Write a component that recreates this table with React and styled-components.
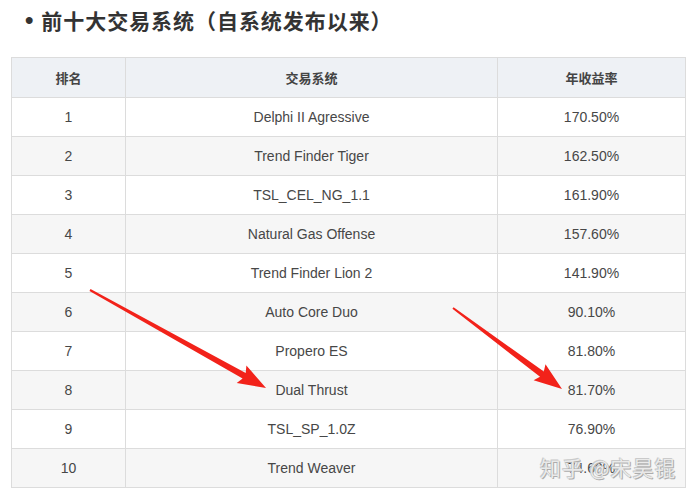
import styled, { createGlobalStyle } from "styled-components";

const rows = [
  ["1", "Delphi II Agressive", "170.50%"],
  ["2", "Trend Finder Tiger", "162.50%"],
  ["3", "TSL_CEL_NG_1.1", "161.90%"],
  ["4", "Natural Gas Offense", "157.60%"],
  ["5", "Trend Finder Lion 2", "141.90%"],
  ["6", "Auto Core Duo", "90.10%"],
  ["7", "Propero ES", "81.80%"],
  ["8", "Dual Thrust", "81.70%"],
  ["9", "TSL_SP_1.0Z", "76.90%"],
  ["10", "Trend Weaver", "74.60%"],
];

// tapered shaft + triangular head, from (x1,y1) to tip (x2,y2)
const arrowPoints = (x1, y1, x2, y2) => {
  const dx = x2 - x1;
  const dy = y2 - y1;
  const len = Math.hypot(dx, dy);
  const ux = dx / len;
  const uy = dy / len;
  const nx = -uy;
  const ny = ux;
  const headLen = 25;
  const headW = 10;
  const shaftStart = 1;
  const shaftEnd = 3.2;
  const bx = x2 - ux * headLen;
  const by = y2 - uy * headLen;
  const pts = [
    [x1 + nx * shaftStart, y1 + ny * shaftStart],
    [bx + nx * shaftEnd, by + ny * shaftEnd],
    [bx + nx * headW - ux * 3, by + ny * headW - uy * 3],
    [x2, y2],
    [bx - nx * headW - ux * 3, by - ny * headW - uy * 3],
    [bx - nx * shaftEnd, by - ny * shaftEnd],
    [x1 - nx * shaftStart, y1 - ny * shaftStart],
  ];
  return pts.map((p) => p.map((v) => v.toFixed(1)).join(",")).join(" ");
};

const GlobalStyle = createGlobalStyle`
  html, body {
    margin: 0;
    padding: 0;
    background: #fff;
    overflow: hidden;
  }
  body {
    font-family: "Liberation Sans", Arial, "Noto Sans CJK SC", sans-serif;
  }
`;

const Page = styled.div`
  position: relative;
  width: 686px;
  height: 494px;
  overflow: hidden;
`;

const Heading = styled.h2`
  display: flex;
  align-items: flex-start;
  gap: 7px;
  margin: 0;
  padding: 6px 0 0 25px;
  height: 51px;
  box-sizing: border-box;
  font-family: "Noto Sans CJK SC", sans-serif;
  font-size: 21px;
  line-height: 28px;
  font-weight: 700;
  color: #333;
  letter-spacing: 0.95px;
`;

const Bullet = styled.span`
  font-family: "Liberation Sans", sans-serif;
  font-size: 24px;
  color: #333;
`;

const Table = styled.table`
  margin: 6px 0 0 11px;
  border-collapse: collapse;
  table-layout: fixed;
  width: 800px;
`;

const Th = styled.th`
  width: ${(p) => p.$w}px;
  height: 39px;
  padding: 0;
  border: 1px solid #dcdcdc;
  background: #eef1f5;
  font-family: "Noto Sans CJK SC", sans-serif;
  font-size: 13px;
  font-weight: 700;
  color: #444;
  text-align: center;
`;

const Row = styled.tr`
  background: ${(p) => (p.$alt ? "#f6f6f6" : "#fff")};
`;

const Td = styled.td`
  height: 38px;
  padding: 0;
  border: 1px solid #dcdcdc;
  font-size: 14px;
  color: #474747;
  text-align: center;
`;

const Overlay = styled.svg`
  position: absolute;
  left: 0;
  top: 0;
  pointer-events: none;
`;

const Watermark = styled.div`
  position: absolute;
  left: 540px;
  top: 452px;
  font-family: "Noto Sans CJK SC", sans-serif;
  font-size: 21px;
  letter-spacing: 1px;
  color: rgba(255, 255, 255, 0.8);
  text-shadow: 0 0 1px #999, 1px 1px 0 #b0b0b0, -1px -1px 0 #d0d0d0;
  white-space: nowrap;
`;

export default function App() {
  return (
    <Page>
      <GlobalStyle />
      <Heading>
        <Bullet>•</Bullet>
        <span>前十大交易系统（自系统发布以来）</span>
      </Heading>
      <Table>
        <thead>
          <tr>
            <Th $w={113}>排名</Th>
            <Th $w={371}>交易系统</Th>
            <Th $w={187}>年收益率</Th>
            <Th $w={129}></Th>
          </tr>
        </thead>
        <tbody>
          {rows.map(([rank, name, rate], i) => (
            <Row key={rank} $alt={i % 2 === 1}>
              <Td>{rank}</Td>
              <Td>{name}</Td>
              <Td>{rate}</Td>
              <Td></Td>
            </Row>
          ))}
        </tbody>
      </Table>
      <Overlay width="686" height="494">
        <polygon points={arrowPoints(90, 290, 266, 388)} fill="#f2221a" />
        <polygon points={arrowPoints(453, 308, 562, 389)} fill="#f2221a" />
      </Overlay>
      <Watermark>知乎 @宋昊锟</Watermark>
    </Page>
  );
}
